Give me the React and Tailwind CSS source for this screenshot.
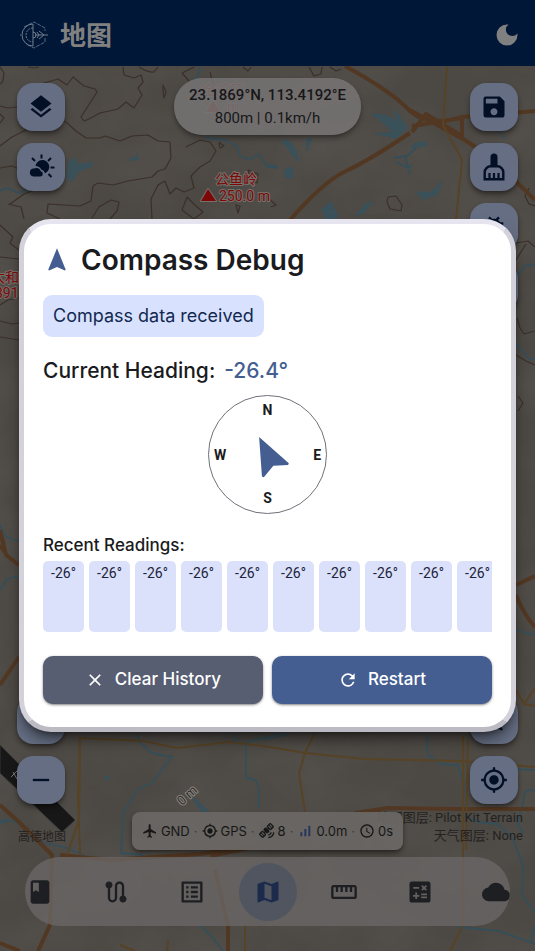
import {
  MdAccessTime,
  MdAdd,
  MdBook,
  MdBugReport,
  MdCalculate,
  MdClose,
  MdCloud,
  MdDarkMode,
  MdFlight,
  MdLayers,
  MdListAlt,
  MdMap,
  MdMyLocation,
  MdNavigation,
  MdRefresh,
  MdRemove,
  MdRoute,
  MdSatelliteAlt,
  MdSave,
  MdSettings,
  MdSignalCellularAlt,
  MdStraighten,
} from 'react-icons/md'

const contours = [
  'M0 67l4 6-1 8-3 3M0 106l8 2 9 -1M0 114l4 4-4 5M28 67l6 1 5-1',
  'M123 67l1 8 10 3 7-3 2 7-5 6 4 7-8 13-8-6-8 7-18 4-11 6-5 2-3-4 16-25-2-3-11-3-11-9-6 8-9-6-14 4-20 11',
  'M139 67q10 6 15 5l4-5M251 67l-3 4-5-4M309 67l5 9 7-2 1-7M330 67l6 4 5-2',
  'M0 146l12-9 18-9 14-5 16-2 6 1 10 9 10 7 14 0 5-2 15 5 12-5 16-1 10 6 12 1 1 16-6 11-7 2-6 6-24 4-15 4-15-2-5 3-2 15-11 5-32-2-1 9 13 6',
  'M0 168l12-2 12 5 22 1 10 8M10 204l14-10 16-6 22-3M24 219l-3-12-13-3',
  'M186 147l14-7 10 2 6 9-6 10-10 6-9 9 3 12-10 4-8-4-6 6-5-13-7 4-7 14 1 21',
  'M187 197l8 8 8 7-9 7-12-9zM92 218l7-11 12-7 8 2-2 9-7 8M236 205l4 1-2 7z',
  'M182 73l12-6M189 81l-7-8M219 142l5 4-4 2-1-5M163 85l3 7-2 6-1-8zM210 72l3 12M248 170l10 4-1 9-7-4z',
  'M388 197l8-1 6 9-1 6-11-2-3-7zM529 188l-4 8 4 8 6 2M267 197l9 8-5 2',
  'M0 225l13 12-3 6 10 8M0 257l19 2M0 305l8-5 11-2M0 321l12 3 7-1M0 337l19 3',
  'M516 243l12-2 7 6M516 260l10-16M517 318l3 10 4 6 11-3M516 355l10 6 9 4M518 396l5 7-5 8',
]

const streams = [
  'M0 191q8-5 14 0t15-4M200 67l-2 9-6 6 4 10 14 4M205 138l20 2 12 6 3 10 10 4 8-6 8 10 12 3',
  'M265 166l13 2M512 286l6-11 7-9 10-2M516 343l14 17 5-2M394 158l13-2 9-8M405 157l5 18M396 162l12 6 4-3',
  'M138 733v8l14 12 20 4-9 11-11 15-14 6-15 24-2 40 22 2M234 733l1 8 11 3v34l10 2 3 9v20',
  'M246 742l24-6 18-5M200 925l13 13 10 13M428 735q-2 13 0 20l12 9 18 1 6 20-1 30 15 7 20 2 14 13 11 28-1 30 13 17',
  'M458 927l41 4 36 13M535 791q-12-4-11 8l-6 24 5 10M0 822l12-2 10 6 12 14 32 8 18 7M535 925l-4 16',
  'M0 525l6 12 13 4M0 590l7-11 12-3M516 585l19-10M516 630l19 5M265 740l24-6M509 769l26 1',
]

const lakes = [
  'M68 162l7-5 3 7 15-2-1 5-14 5-6 11-6-6zM129 158l6-1 2-5 2 8-8 1z',
  'M370 113l17 2 9 5-3-12 7 8 8 12-12 11-24-6 20-1-8-8zM410 149l4-6 12-2 2 5z',
  'M280 139l10 2 7 10 2 12-7-8zM306 138l6 1-5 13-1-6zM284 173a5 6 0 1 0 10 0 5 6 0 1 0-10 0',
  'M321 209l10-8 7 14-2 5h-10zM356 214l10-11 8-2-10 12-6 3zM414 191l16 1 14-12-7 15-14 5z',
  'M495 130l12 8-3 1zM104 777l8-2-6 6zM187 791l20 18 6 7-12-4zM0 820l7-1-4 7z',
]

const highways = [
  'M345 66q44 24 63 43t54 8l73-6M410 133q-42 28-64 38t-56 49M408 109l55 30 28 18 44 43M412 132l14-18 36 22 0-18-50 8',
  'M0 805l20 18 32 32-2 70-12 26M0 943l20 8M60 855l50 5 90-6 60-8M228 925v26M215 870l13 56',
  'M0 530l6 25 13 10M0 545l8 12M0 685l19-28M516 585l19-9M516 595q8 20 19 32',
  'M210 856l60-12M355 813l33-5 64 1h83',
]

const roads = [
  'M447 67l-4 58 19 35-6 60M516 690l8 14 11 2M524 704l11-16',
  'M80 855l-2-60 2-57 63 3 34 7 53-6 40 5 35 6 60 6 97 2 73 6M67 855l12-35 1-70M305 753l10-20M305 753l-6 20 6 40',
  'M463 735v190l-13 26M468 740l-2 110M120 945l15 6M168 940l-1 11M245 925v26',
]

function MapCanvas() {
  return (
    <svg
      className="absolute inset-0 h-full w-full"
      viewBox="0 66 535 885"
      preserveAspectRatio="xMidYMid slice"
      fill="none"
      strokeLinejoin="round"
      aria-hidden="true"
    >
      <defs>
        <filter id="relief" x="0" y="0" width="100%" height="100%">
          <feTurbulence type="fractalNoise" baseFrequency="0.012 0.016" numOctaves="4" seed="8" />
          <feColorMatrix values="0 0 0 0 0.2  0 0 0 0 0.19  0 0 0 0 0.18  0.9 0 0 0 -0.25" />
        </filter>
      </defs>
      <rect y="66" width="535" height="885" fill="#4c4843" />
      <rect y="66" width="535" height="885" filter="url(#relief)" opacity="0.3" />
      <g fill="#3b515a">
        {lakes.map((d) => (
          <path key={d} d={d} />
        ))}
      </g>
      <g stroke="#3b3029" strokeWidth="1.2">
        {contours.map((d) => (
          <path key={d} d={d} />
        ))}
      </g>
      <g stroke="#354f5a" strokeWidth="1.8">
        {streams.map((d) => (
          <path key={d} d={d} />
        ))}
      </g>
      <g stroke="#523822" strokeWidth="4">
        {highways.map((d) => (
          <path key={d} d={d} />
        ))}
      </g>
      <g stroke="#574325" strokeWidth="2">
        {roads.map((d) => (
          <path key={d} d={d} />
        ))}
      </g>
      <path d="M0 745l75 75-13 12-62-59z" fill="#171717" stroke="#343434" />
      <path d="M11 777l7-7m-5 2 4 7" stroke="#77736d" />
      <g
        fill="#7c0808"
        stroke="#77716c"
        strokeWidth="2"
        paintOrder="stroke"
        fontSize="14"
        fontFamily="Roboto, 'Noto Sans CJK SC', sans-serif"
      >
        <text x="215" y="184">公鱼岭</text>
        <path d="M201 201l7-12 8 12z" />
        <text x="219" y="201">250.0 m</text>
        <text x="-9" y="282">太和</text>
        <text x="-5" y="298">391</text>
        <text x="202" y="95" opacity="0.7">金鸡顶</text>
        <path d="M206 112l7-12 7 12z" opacity="0.7" />
        <text x="227" y="112" opacity="0.7">m</text>
      </g>
      <text
        x="182"
        y="806"
        transform="rotate(-42 182 806)"
        fill="#33302d"
        stroke="#8a857f"
        strokeWidth="2"
        paintOrder="stroke"
        fontSize="13"
        fontFamily="Roboto, sans-serif"
      >
        0 m
      </text>
    </svg>
  )
}

function LogoIcon() {
  return (
    <svg className="h-7 w-7" viewBox="0 0 28 28" fill="none" stroke="#6e7b8c" aria-hidden="true">
      <path d="M4 6l10-5 11 6v3M25 17v4l-11 6-8-4" strokeWidth="0.8" strokeDasharray="4 1" />
      <path d="M13 3v22M13 3a11 11 0 0 0 0 22" />
      <path d="M13 7a7 7 0 0 0 0 14" strokeDasharray="2 1" />
      <path d="M13 11a3 3 0 0 1 0 6M0 14h1M15 14h13M17 11l2 3-2 3M19 10l5 4-5 4" />
    </svg>
  )
}

function PartlyCloudyIcon() {
  return (
    <svg className="h-7 w-7" viewBox="0 0 28 28" fill="currentColor" aria-hidden="true">
      <path d="M8.5 13a6.9 6.9 0 1 1 9.5 7.300 5 5 0 0 0-3.8-3.7A6 6 0 0 0 8.5 13z" />
      <path d="M6.5 23.5a4 4 0 1 1 .8-8 4.5 4.5 0 0 1 6.5 2.7 2.7 2.7 0 0 1-.3 5.3z" />
      <path
        d="M14.5 1.500v4M5 5l3 3M24 5l-3 3M23.500 14.500h4M21.500 21l3 3"
        stroke="currentColor"
        strokeWidth="2"
      />
    </svg>
  )
}

function BroomIcon() {
  return (
    <svg className="h-7 w-7" viewBox="0 0 28 28" fill="currentColor" aria-hidden="true">
      <path d="M10.500 4a3.500 3.500 0 0 1 7 0v9h-7z" />
      <path
        d="M4.700 26.300v-7a6 6 0 0 1 6-6h6.600a6 6 0 0 1 6 6v7z"
        fill="none"
        stroke="currentColor"
        strokeWidth="2.400"
      />
      <path d="M9.500 20v6M14 20v6M18.500 20v6" stroke="currentColor" strokeWidth="2.200" />
    </svg>
  )
}

function MapButton({ label, children }) {
  return (
    <button
      type="button"
      aria-label={label}
      className="flex h-12 w-12 items-center justify-center rounded-2xl bg-[#656e83] text-[28px] text-[#020f24] shadow-md shadow-black/40"
    >
      {children}
    </button>
  )
}

function StatusBar() {
  return (
    <div className="flex h-[38px] items-center gap-1 rounded-lg bg-[#696664]/95 px-[10px] text-[13px] text-[#171717] shadow-md shadow-black/40">
      <span className="flex items-center gap-[3px]">
        <MdFlight className="text-base" />
        GND
      </span>
      <span className="text-[#3e3c3b]">·</span>
      <span className="flex items-center gap-[3px]">
        <MdMyLocation className="text-base" />
        GPS
      </span>
      <span className="text-[#3e3c3b]">·</span>
      <span className="flex items-center gap-[3px]">
        <MdSatelliteAlt className="text-base" />8
      </span>
      <span className="text-[#3e3c3b]">·</span>
      <span className="flex items-center gap-[3px]">
        <MdSignalCellularAlt className="text-base text-[#26375b]" />
        0.0m
      </span>
      <span className="text-[#3e3c3b]">·</span>
      <span className="flex items-center gap-[3px]">
        <MdAccessTime className="text-base" />
        0s
      </span>
    </div>
  )
}

const navItems = [
  { label: 'Logbook', Icon: MdBook },
  { label: 'Routes', Icon: MdRoute },
  { label: 'Checklist', Icon: MdListAlt },
  { label: 'Map', Icon: MdMap, active: true },
  { label: 'Measure', Icon: MdStraighten },
  { label: 'Calculator', Icon: MdCalculate },
  { label: 'Weather', Icon: MdCloud },
]

function BottomNav() {
  return (
    <nav className="flex h-[69px] w-full items-center justify-center overflow-hidden rounded-full bg-[#6c6868]/75">
      {navItems.map(({ label, Icon, active }) => (
        <div key={label} className="flex w-[76px] shrink-0 justify-center">
          <button
            type="button"
            aria-label={label}
            className={`flex h-[58px] w-[58px] items-center justify-center rounded-full text-[28px] ${
              active ? 'bg-[#50555f] text-[#1c2b4b]' : 'text-[#1d1f23]'
            }`}
          >
            <Icon />
          </button>
        </div>
      ))}
    </nav>
  )
}

function CompassDial({ heading }) {
  return (
    <div className="relative h-[119px] w-[119px] rounded-full border border-[#70717a] font-[Roboto,sans-serif] text-sm leading-4 font-bold text-[#1a1b20]">
      <span className="absolute inset-x-0 top-[6px] text-center">N</span>
      <span className="absolute inset-x-0 bottom-[7px] text-center">S</span>
      <span className="absolute inset-y-0 left-[5px] flex items-center">W</span>
      <span className="absolute inset-y-0 right-[5px] flex items-center">E</span>
      <div className="flex h-full items-center justify-center text-5xl text-[#445e91]">
        <MdNavigation style={{ transform: `rotate(${heading}deg)` }} />
      </div>
    </div>
  )
}

const readings = [-26, -26, -26, -26, -26, -26, -26, -26, -26, -26]

function CompassDialog() {
  return (
    <div
      role="dialog"
      aria-labelledby="compass-title"
      className="flex w-full max-w-xl flex-col rounded-[32px] border-[5px] border-t-[#e6e4ee] border-r-[#d3d2da] border-b-[#bcbbc3] border-l-[#d3d2da] bg-white px-[19px] pt-5 pb-[23px] text-[#1a1b20] shadow-lg shadow-black/50"
    >
      <div className="flex items-center gap-[10px]">
        <MdNavigation className="text-[28px] text-[#445e91]" />
        <h2 id="compass-title" className="text-[28px] leading-8 font-semibold">
          Compass Debug
        </h2>
      </div>

      <p className="mt-[19px] self-start rounded-[9px] bg-[#d8e2ff] px-[10px] py-[9px] text-lg leading-6 text-[#12284f]">
        Compass data received
      </p>

      <p className="mt-5 flex gap-[9px] text-[21px] leading-7 font-medium">
        <span>Current Heading:</span>
        <span className="text-[#445e91]">-26.4°</span>
      </p>

      <div className="mt-[10px] flex justify-center">
        <CompassDial heading={-26.4} />
      </div>

      <h3 className="mt-[19px] text-[17px] leading-6 font-medium">Recent Readings:</h3>
      <ul className="mt-1 flex gap-[5px] overflow-hidden font-[Roboto,sans-serif] text-sm">
        {readings.map((value, index) => (
          <li
            key={index}
            className="h-[71px] w-[41px] shrink-0 rounded-[5px] bg-[#dce1fb] pt-[2px] text-center text-[#20243a]"
          >
            {value}°
          </li>
        ))}
      </ul>

      <div className="mt-6 flex gap-[9px] text-[17px] font-medium text-white">
        <button
          type="button"
          className="flex h-12 flex-1 items-center justify-center gap-[10px] rounded-[10px] bg-[#575e71] shadow-sm shadow-black/40"
        >
          <MdClose className="text-xl" />
          Clear History
        </button>
        <button
          type="button"
          className="flex h-12 flex-1 items-center justify-center gap-[10px] rounded-[10px] bg-[#445e91] shadow-sm shadow-black/40"
        >
          <MdRefresh className="text-xl" />
          Restart
        </button>
      </div>
    </div>
  )
}

export default function App() {
  return (
    <div className="relative flex min-h-screen flex-col font-[Inter,'Noto_Sans_CJK_SC',sans-serif]">
      <header className="flex h-[66px] items-center gap-3 bg-[#001737] pt-1 pr-[14px] pl-5">
        <LogoIcon />
        <h1 className="flex-1 text-[26px] font-bold text-[#808080]">地图</h1>
        <button type="button" aria-label="Dark mode" className="text-[28px] text-[#808080]">
          <MdDarkMode />
        </button>
      </header>

      <main className="relative flex flex-1 flex-col overflow-hidden">
        <MapCanvas />

        <div className="relative flex flex-1 justify-between px-[17px] pt-[17px]">
          <div className="flex flex-col gap-3">
            <MapButton label="Layers">
              <MdLayers />
            </MapButton>
            <MapButton label="Weather">
              <PartlyCloudyIcon />
            </MapButton>
            <div className="mt-auto" />
            <MapButton label="Zoom in">
              <MdAdd />
            </MapButton>
            <MapButton label="Zoom out">
              <MdRemove />
            </MapButton>
          </div>

          <div className="mt-[-5px] h-[57px] rounded-[28px] bg-[#777474]/85 px-[15px] pt-[6px] text-center font-[Roboto,sans-serif] text-[15px] leading-[23px] text-[#171719] shadow-md shadow-black/30">
            <p className="font-medium">23.1869°N, 113.4192°E</p>
            <p>800m | 0.1km/h</p>
          </div>

          <div className="flex flex-col gap-3">
            <MapButton label="Save">
              <MdSave />
            </MapButton>
            <MapButton label="Clear track">
              <BroomIcon />
            </MapButton>
            <MapButton label="Debug">
              <MdBugReport />
            </MapButton>
            <MapButton label="Settings">
              <MdSettings />
            </MapButton>
            <div className="mt-auto" />
            <MapButton label="North up">
              <MdNavigation />
            </MapButton>
            <MapButton label="My location">
              <MdMyLocation />
            </MapButton>
          </div>
        </div>

        <div className="relative flex h-[53px] items-end justify-between pr-3 pb-[11px] pl-[18px] text-xs leading-[18px] text-[#24221f]">
          <span>高德地图</span>
          <p className="pb-[1px] text-right font-[Roboto,'Noto_Sans_CJK_SC',sans-serif] text-[13px] leading-[18px]">
            地图图层: Pilot Kit Terrain
            <br />
            天气图层: None
          </p>
          <div className="absolute inset-x-0 top-2 flex justify-center">
            <StatusBar />
          </div>
        </div>

        <div className="relative px-[25px] pb-[25px]">
          <BottomNav />
        </div>
      </main>

      <div className="absolute inset-0 flex items-center justify-center px-[19px]">
        <CompassDialog />
      </div>
    </div>
  )
}
